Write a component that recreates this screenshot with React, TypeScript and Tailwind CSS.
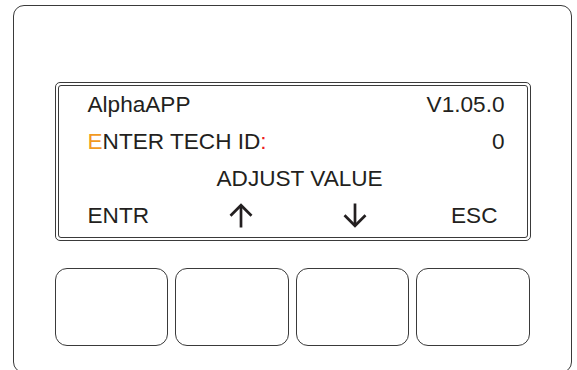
import React from "react";

function Arrow({ dir }: { dir: "up" | "down" }) {
  return (
    <svg
      width={24}
      height={25}
      viewBox="0 0 24 25"
      className={dir === "down" ? "rotate-180" : ""}
      aria-hidden
    >
      <path d="M12 24.5V2.2" stroke="#231f20" strokeWidth={2.7} fill="none" />
      <path d="M1.5 12.8L12 2.2L22.5 12.8" stroke="#231f20" strokeWidth={2.7} fill="none" />
    </svg>
  );
}

export default function App() {
  return (
    <div
      className="relative h-[370px] w-[577px] overflow-hidden bg-white text-[#231f20]"
      style={{ fontFamily: '"Liberation Sans", Arial, sans-serif' }}
    >
      <div className="ml-[13px] mt-[5px] h-[368px] w-[559px] rounded-[11px] border-[1.5px] border-[#3a3a3a] pl-[40.5px] pt-[75.5px]">
        {/* display */}
        <div className="h-[159px] w-[476px] rounded-[5px] border-[1.5px] border-[#3a3a3a] p-[2px]">
          <div className="h-full rounded-[3px] border border-[#3a3a3a] text-[22.6px] leading-[37px]">
            <div className="flex justify-between pl-[29px] pr-[22px]">
              <span>AlphaAPP</span>
              <span>V1.05.0</span>
            </div>
            <div className="flex justify-between pl-[29px] pr-[22px]">
              <span>
                <span className="text-[#f29a1f]">E</span>NTER TECH ID
                <span className="text-[#ed1c24]">:</span>
              </span>
              <span>0</span>
            </div>
            <div className="pl-[158px]">ADJUST VALUE</div>
            <div className="flex items-center pl-[29px]">
              <span>ENTR</span>
              <span className="ml-[80px] flex">
                <Arrow dir="up" />
              </span>
              <span className="ml-[90px] flex">
                <Arrow dir="down" />
              </span>
              <span className="ml-[84px]">ESC</span>
            </div>
          </div>
        </div>
        {/* soft keys */}
        <div className="mt-[27px] grid w-[475px] grid-cols-4 gap-[7px]">
          {[0, 1, 2, 3].map((i) => (
            <div
              key={i}
              className="h-[78px] rounded-[12px] border-[1.5px] border-[#3a3a3a]"
            />
          ))}
        </div>
      </div>
    </div>
  );
}
